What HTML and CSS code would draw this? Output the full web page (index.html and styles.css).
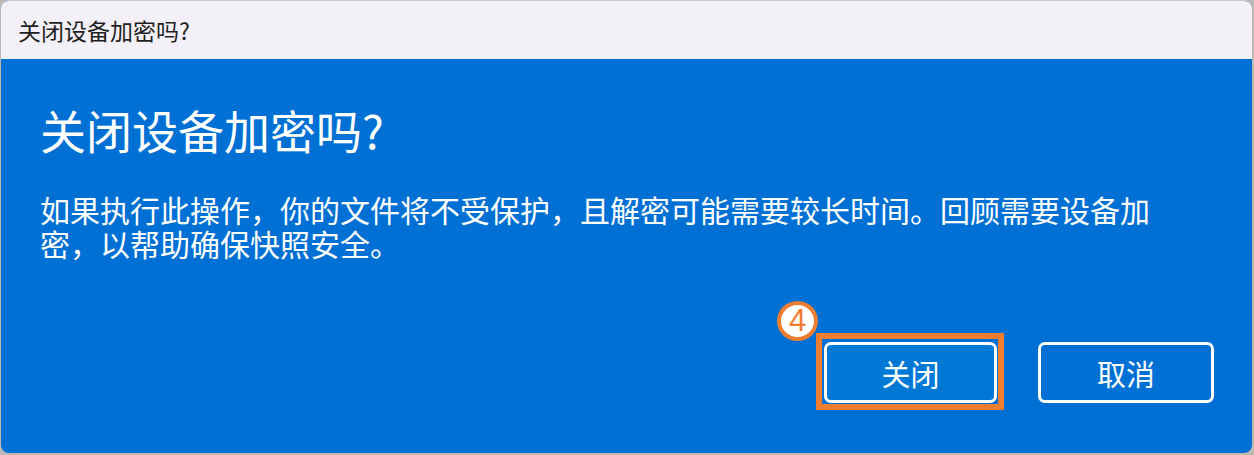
FILE: index.html
```html
<!DOCTYPE html>
<html>
<head>
    <title>关闭设备加密吗?</title>
    <link rel="stylesheet" href="styles.css">
</head>
<body>
    <div class="window">
        <div class="titlebar">关闭设备加密吗?</div>

        <div class="dialog">
            <h1>关闭设备加密吗?</h1>
            <p class="message">如果执行此操作，你的文件将不受保护，且解密可能需要较长时间。回顾需要设备加密，以帮助确保快照安全。</p>

            <div class="actions">
                <button class="btn btn-primary">
                    关闭
                    <span class="step-badge">4</span>
                </button>
                <button class="btn">取消</button>
            </div>
        </div>
    </div>
</body>
</html>
```

FILE: styles.css
```css
:root {
    --accent: #0070d4;
    --accent-light: #0078d6;
    --titlebar-bg: #f3f0f7;
    --page-bg: #bcb8b4;
    --marker: #ed7d31;
    --text-dark: #1f1f1f;
}

* {
    box-sizing: border-box;
    margin: 0;
    padding: 0;
}

body {
    width: 1254px;
    height: 455px;
    overflow: hidden;
    background-color: var(--page-bg);
    font-family: "Noto Sans CJK SC", "Noto Sans", sans-serif;
    padding: 0 2px 0 1px;
}

.window {
    height: 453px;
    border-radius: 8px;
    overflow: hidden;
    background-color: var(--accent);
    border-top: 1px solid #c9c6cc;
}

.titlebar {
    height: 58px;
    display: flex;
    align-items: center;
    padding-left: 17px;
    background-color: var(--titlebar-bg);
    color: var(--text-dark);
    font-size: 23px;
}

.dialog {
    padding: 42px 38px 0 39px;
    color: white;
}

.dialog h1 {
    font-size: 46px;
    font-weight: 400;
    line-height: 56px;
}

.message {
    width: 1130px;
    margin-top: 35px;
    font-size: 30px;
    line-height: 34px;
}

.actions {
    display: flex;
    justify-content: flex-end;
    gap: 41px;
    margin-top: 82px;
}

.btn {
    position: relative;
    width: 176px;
    height: 61px;
    border: 3px solid white;
    border-radius: 7px;
    background-color: var(--accent);
    color: white;
    font-family: inherit;
    font-size: 29px;
}

.btn-primary {
    width: 173px;
    background-color: var(--accent-light);
}

/* annotation frame round the primary button */
.btn-primary::after {
    content: "";
    position: absolute;
    top: -12px;
    left: -11px;
    right: -10px;
    bottom: -10px;
    border: 6px solid var(--marker);
}

.step-badge {
    position: absolute;
    left: -50px;
    top: -44px;
    width: 41px;
    height: 40px;
    border: 4px solid var(--marker);
    border-radius: 50%;
    background-color: white;
    color: var(--marker);
    font-family: "Liberation Sans", sans-serif;
    font-size: 31px;
    line-height: 32px;
    text-align: center;
}
```
